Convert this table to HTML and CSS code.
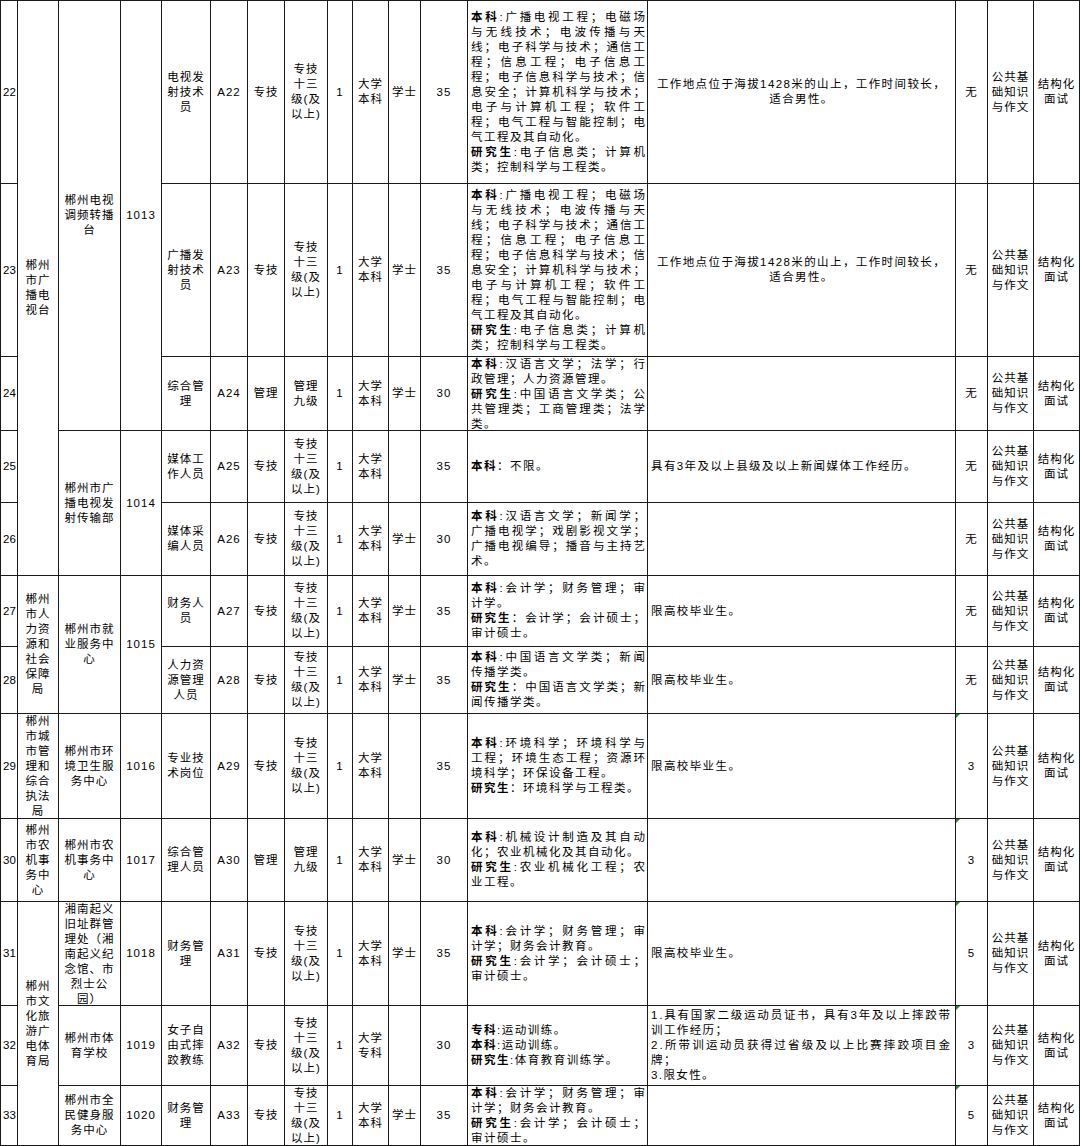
FILE: index.html
```html
<!DOCTYPE html>
<html lang="zh-CN">
<head>
<meta charset="utf-8">
<title>岗位表</title>
<link rel="stylesheet" href="styles.css">
</head>
<body>
<div class="sheet">
  <!-- Row 22 -->
  <div class="c n">22</div>
  <div class="c r5">郴州<br>市广<br>播电<br>视台</div>
  <div class="c r3">郴州电视<br>调频转播<br>台</div>
  <div class="c r3">1013</div>
  <div class="c">电视发<br>射技术<br>员</div>
  <div class="c">A22</div>
  <div class="c">专技</div>
  <div class="c">专技<br>十三<br>级(及<br>以上)</div>
  <div class="c">1</div>
  <div class="c">大学<br>本科</div>
  <div class="c">学士</div>
  <div class="c">35</div>
  <div class="c m">
    <div class="j"><b>本科</b>:广播电视工程；电磁场</div>
    <div class="j">与无线技术；电波传播与天</div>
    <div class="j">线；电子科学与技术；通信工</div>
    <div class="j">程；信息工程；电子信息工</div>
    <div class="j">程；电子信息科学与技术；信</div>
    <div class="j">息安全；计算机科学与技术；</div>
    <div class="j">电子与计算机工程；软件工</div>
    <div class="j">程；电气工程与智能控制；电</div>
    <div class="l">气工程及其自动化。</div>
    <div class="j"><b>研究生</b>:电子信息类；计算机</div>
    <div class="l">类；控制科学与工程类。</div>
  </div>
  <div class="c oc">工作地点位于海拔1428米的山上，工作时间较长，<br>适合男性。</div>
  <div class="c">无</div>
  <div class="c">公共基<br>础知识<br>与作文</div>
  <div class="c">结构化<br>面试</div>

  <!-- Row 23 -->
  <div class="c n">23</div>
  <div class="c">广播发<br>射技术<br>员</div>
  <div class="c">A23</div>
  <div class="c">专技</div>
  <div class="c">专技<br>十三<br>级(及<br>以上)</div>
  <div class="c">1</div>
  <div class="c">大学<br>本科</div>
  <div class="c">学士</div>
  <div class="c">35</div>
  <div class="c m">
    <div class="j"><b>本科</b>:广播电视工程；电磁场</div>
    <div class="j">与无线技术；电波传播与天</div>
    <div class="j">线；电子科学与技术；通信工</div>
    <div class="j">程；信息工程；电子信息工</div>
    <div class="j">程；电子信息科学与技术；信</div>
    <div class="j">息安全；计算机科学与技术；</div>
    <div class="j">电子与计算机工程；软件工</div>
    <div class="j">程；电气工程与智能控制；电</div>
    <div class="l">气工程及其自动化。</div>
    <div class="j"><b>研究生</b>:电子信息类；计算机</div>
    <div class="l">类；控制科学与工程类。</div>
  </div>
  <div class="c oc">工作地点位于海拔1428米的山上，工作时间较长，<br>适合男性。</div>
  <div class="c">无</div>
  <div class="c">公共基<br>础知识<br>与作文</div>
  <div class="c">结构化<br>面试</div>

  <!-- Row 24 -->
  <div class="c n">24</div>
  <div class="c">综合管<br>理</div>
  <div class="c">A24</div>
  <div class="c">管理</div>
  <div class="c">管理<br>九级</div>
  <div class="c">1</div>
  <div class="c">大学<br>本科</div>
  <div class="c">学士</div>
  <div class="c">30</div>
  <div class="c m">
    <div class="j"><b>本科</b>:汉语言文学；法学；行</div>
    <div class="l">政管理；人力资源管理。</div>
    <div class="j"><b>研究生</b>:中国语言文学类；公</div>
    <div class="j">共管理类；工商管理类；法学</div>
    <div class="l">类。</div>
  </div>
  <div class="c o"></div>
  <div class="c">无</div>
  <div class="c">公共基<br>础知识<br>与作文</div>
  <div class="c">结构化<br>面试</div>

  <!-- Row 25 -->
  <div class="c n">25</div>
  <div class="c r2">郴州市广<br>播电视发<br>射传输部</div>
  <div class="c r2">1014</div>
  <div class="c">媒体工<br>作人员</div>
  <div class="c">A25</div>
  <div class="c">专技</div>
  <div class="c">专技<br>十三<br>级(及<br>以上)</div>
  <div class="c">1</div>
  <div class="c">大学<br>本科</div>
  <div class="c"></div>
  <div class="c">35</div>
  <div class="c m">
    <div class="l"><b>本科</b>：不限。</div>
  </div>
  <div class="c o"><div class="l">具有3年及以上县级及以上新闻媒体工作经历。</div></div>
  <div class="c">无</div>
  <div class="c">公共基<br>础知识<br>与作文</div>
  <div class="c">结构化<br>面试</div>

  <!-- Row 26 -->
  <div class="c n">26</div>
  <div class="c">媒体采<br>编人员</div>
  <div class="c">A26</div>
  <div class="c">专技</div>
  <div class="c">专技<br>十三<br>级(及<br>以上)</div>
  <div class="c">1</div>
  <div class="c">大学<br>本科</div>
  <div class="c">学士</div>
  <div class="c">30</div>
  <div class="c m">
    <div class="j"><b>本科</b>:汉语言文学；新闻学；</div>
    <div class="j">广播电视学；戏剧影视文学；</div>
    <div class="j">广播电视编导；播音与主持艺</div>
    <div class="l">术。</div>
  </div>
  <div class="c o"></div>
  <div class="c">无</div>
  <div class="c">公共基<br>础知识<br>与作文</div>
  <div class="c">结构化<br>面试</div>

  <!-- Row 27 -->
  <div class="c n">27</div>
  <div class="c r2">郴州<br>市人<br>力资<br>源和<br>社会<br>保障<br>局</div>
  <div class="c r2">郴州市就<br>业服务中<br>心</div>
  <div class="c r2">1015</div>
  <div class="c">财务人<br>员</div>
  <div class="c">A27</div>
  <div class="c">专技</div>
  <div class="c">专技<br>十三<br>级(及<br>以上)</div>
  <div class="c">1</div>
  <div class="c">大学<br>本科</div>
  <div class="c">学士</div>
  <div class="c">35</div>
  <div class="c m">
    <div class="j"><b>本科</b>:会计学；财务管理；审</div>
    <div class="l">计学。</div>
    <div class="j"><b>研究生</b>：会计学；会计硕士；</div>
    <div class="l">审计硕士。</div>
  </div>
  <div class="c o"><div class="l">限高校毕业生。</div></div>
  <div class="c">无</div>
  <div class="c">公共基<br>础知识<br>与作文</div>
  <div class="c">结构化<br>面试</div>

  <!-- Row 28 -->
  <div class="c n">28</div>
  <div class="c">人力资<br>源管理<br>人员</div>
  <div class="c">A28</div>
  <div class="c">专技</div>
  <div class="c">专技<br>十三<br>级(及<br>以上)</div>
  <div class="c">1</div>
  <div class="c">大学<br>本科</div>
  <div class="c">学士</div>
  <div class="c">35</div>
  <div class="c m">
    <div class="j"><b>本科</b>:中国语言文学类；新闻</div>
    <div class="l">传播学类。</div>
    <div class="j"><b>研究生</b>：中国语言文学类；新</div>
    <div class="l">闻传播学类。</div>
  </div>
  <div class="c o"><div class="l">限高校毕业生。</div></div>
  <div class="c">无</div>
  <div class="c">公共基<br>础知识<br>与作文</div>
  <div class="c">结构化<br>面试</div>

  <!-- Row 29 -->
  <div class="c n">29</div>
  <div class="c">郴州<br>市城<br>市管<br>理和<br>综合<br>执法<br>局</div>
  <div class="c">郴州市环<br>境卫生服<br>务中心</div>
  <div class="c">1016</div>
  <div class="c">专业技<br>术岗位</div>
  <div class="c">A29</div>
  <div class="c">专技</div>
  <div class="c">专技<br>十三<br>级(及<br>以上)</div>
  <div class="c">1</div>
  <div class="c">大学<br>本科</div>
  <div class="c"></div>
  <div class="c">35</div>
  <div class="c m">
    <div class="j"><b>本科</b>:环境科学；环境科学与</div>
    <div class="j">工程；环境生态工程；资源环</div>
    <div class="l">境科学；环保设备工程。</div>
    <div class="l"><b>研究生</b>：环境科学与工程类。</div>
  </div>
  <div class="c o"><div class="l">限高校毕业生。</div></div>
  <div class="c flag">3</div>
  <div class="c">公共基<br>础知识<br>与作文</div>
  <div class="c">结构化<br>面试</div>

  <!-- Row 30 -->
  <div class="c n">30</div>
  <div class="c">郴州<br>市农<br>机事<br>务中<br>心</div>
  <div class="c">郴州市农<br>机事务中<br>心</div>
  <div class="c">1017</div>
  <div class="c">综合管<br>理人员</div>
  <div class="c">A30</div>
  <div class="c">管理</div>
  <div class="c">管理<br>九级</div>
  <div class="c">1</div>
  <div class="c">大学<br>本科</div>
  <div class="c">学士</div>
  <div class="c">30</div>
  <div class="c m">
    <div class="j"><b>本科</b>:机械设计制造及其自动</div>
    <div class="l">化；农业机械化及其自动化。</div>
    <div class="j"><b>研究生</b>:农业机械化工程；农</div>
    <div class="l">业工程。</div>
  </div>
  <div class="c o"></div>
  <div class="c flag">3</div>
  <div class="c">公共基<br>础知识<br>与作文</div>
  <div class="c">结构化<br>面试</div>

  <!-- Row 31 -->
  <div class="c n">31</div>
  <div class="c r3">郴州<br>市文<br>化旅<br>游广<br>电体<br>育局</div>
  <div class="c">湘南起义<br>旧址群管<br>理处（湘<br>南起义纪<br>念馆、市<br>烈士公<br>园）</div>
  <div class="c">1018</div>
  <div class="c">财务管<br>理</div>
  <div class="c">A31</div>
  <div class="c">专技</div>
  <div class="c">专技<br>十三<br>级(及<br>以上)</div>
  <div class="c">1</div>
  <div class="c">大学<br>本科</div>
  <div class="c">学士</div>
  <div class="c">35</div>
  <div class="c m">
    <div class="j"><b>本科</b>:会计学；财务管理；审</div>
    <div class="l">计学；财务会计教育。</div>
    <div class="j"><b>研究生</b>:会计学；会计硕士；</div>
    <div class="l">审计硕士。</div>
  </div>
  <div class="c o"><div class="l">限高校毕业生。</div></div>
  <div class="c flag">5</div>
  <div class="c">公共基<br>础知识<br>与作文</div>
  <div class="c">结构化<br>面试</div>

  <!-- Row 32 -->
  <div class="c n">32</div>
  <div class="c">郴州市体<br>育学校</div>
  <div class="c">1019</div>
  <div class="c">女子自<br>由式摔<br>跤教练</div>
  <div class="c">A32</div>
  <div class="c">专技</div>
  <div class="c">专技<br>十三<br>级(及<br>以上)</div>
  <div class="c">1</div>
  <div class="c">大学<br>专科</div>
  <div class="c"></div>
  <div class="c">30</div>
  <div class="c m">
    <div class="l"><b>专科</b>:运动训练。</div>
    <div class="l"><b>本科</b>:运动训练。</div>
    <div class="l"><b>研究生</b>:体育教育训练学。</div>
  </div>
  <div class="c o">
    <div class="j">1.具有国家二级运动员证书，具有3年及以上摔跤带</div>
    <div class="l">训工作经历；</div>
    <div class="j">2.所带训运动员获得过省级及以上比赛摔跤项目金</div>
    <div class="l">牌；</div>
    <div class="l">3.限女性。</div>
  </div>
  <div class="c flag">3</div>
  <div class="c">公共基<br>础知识<br>与作文</div>
  <div class="c">结构化<br>面试</div>

  <!-- Row 33 -->
  <div class="c n">33</div>
  <div class="c">郴州市全<br>民健身服<br>务中心</div>
  <div class="c">1020</div>
  <div class="c">财务管<br>理</div>
  <div class="c">A33</div>
  <div class="c">专技</div>
  <div class="c">专技<br>十三<br>级(及<br>以上)</div>
  <div class="c">1</div>
  <div class="c">大学<br>本科</div>
  <div class="c">学士</div>
  <div class="c">35</div>
  <div class="c m">
    <div class="j"><b>本科</b>:会计学；财务管理；审</div>
    <div class="l">计学；财务会计教育。</div>
    <div class="j"><b>研究生</b>:会计学；会计硕士；</div>
    <div class="l">审计硕士。</div>
  </div>
  <div class="c o"></div>
  <div class="c flag">5</div>
  <div class="c">公共基<br>础知识<br>与作文</div>
  <div class="c">结构化<br>面试</div>
</div>
<script src="script.js"></script>
</body>
</html>
```

FILE: styles.css
```css
html, body {
  margin: 0;
  padding: 0;
  background: #ffffff;
}

body {
  font-family: "Liberation Sans", "Noto Sans CJK SC", sans-serif;
  color: #000;
}

.sheet {
  display: grid;
  grid-template-columns: 16px 40px 61px 40px 48px 36px 36px 42px 24px 35px 31px 46px 179px 307px 31px 45px 45px;
  grid-template-rows: 182px 172px 73px 71px 72px 70px 66px 104px 82px 103px 79px 59px;
  gap: 1px;
  padding: 1px;
  width: 1080px;
  height: 1146px;
  box-sizing: border-box;
  background: #1a1a1a;
}

.c {
  background: #fff;
  display: flex;
  flex-direction: column;
  justify-content: safe center;
  align-items: center;
  text-align: center;
  overflow: hidden;
  font-size: 11.5px;
  line-height: 15px;
  letter-spacing: 1px;
  position: relative;
  min-width: 0;
  min-height: 0;
}

.r2 { grid-row: span 2; }
.r3 { grid-row: span 3; }
.r5 { grid-row: span 5; }

.n {
  align-items: flex-start;
  padding-left: 2px;
  letter-spacing: 0;
}

.m {
  align-items: stretch;
  text-align: left;
  padding: 0 2px 0 3px;
}

.o {
  align-items: stretch;
  text-align: left;
  padding: 0 5px 0 3px;
  letter-spacing: 1.4px;
}

.oc {
  letter-spacing: 1.4px;
}

.j {
  text-align: justify;
  text-align-last: justify;
  letter-spacing: 0;
}

.j.fit {
  text-align: left;
  text-align-last: auto;
  white-space: nowrap;
}

.l {
  white-space: nowrap;
  letter-spacing: 1.5px;
}

.o .l {
  letter-spacing: 1.4px;
}

b {
  font-weight: 700;
}

.flag::before {
  content: "";
  position: absolute;
  top: 0;
  left: 0;
  border-top: 4px solid #1f8f1f;
  border-right: 4px solid transparent;
}
```

FILE: script.js
```js
(function () {
  function distribute() {
    var lines = document.querySelectorAll('.j');
    lines.forEach(function (el) {
      el.classList.add('fit');
      el.style.letterSpacing = '0px';
      var range = document.createRange();
      range.selectNodeContents(el);
      var natural = range.getBoundingClientRect().width;
      var available = el.clientWidth;
      var count = Array.from(el.textContent.trim()).length;
      if (count > 1 && available > natural) {
        var spacing = (available - natural) / (count - 1);
        el.style.letterSpacing = spacing.toFixed(3) + 'px';
      }
    });
  }
  distribute();
  if (document.fonts && document.fonts.ready) {
    document.fonts.ready.then(distribute);
  }
})();
```
